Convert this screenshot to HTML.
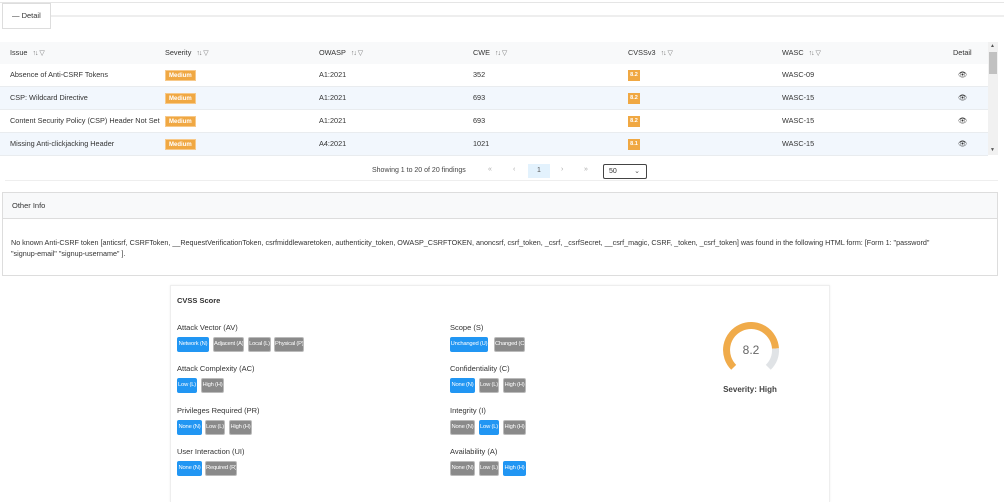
<!DOCTYPE html>
<html><head><meta charset="utf-8"><style>
*{box-sizing:border-box;margin:0;padding:0}
body{width:1004px;height:502px;background:#fff;font-family:"Liberation Sans",sans-serif;color:#333;position:relative;overflow:hidden;font-size:7px}
.a{position:absolute}
.hd{position:absolute;top:42px;left:0;width:988px;height:22px;background:#f8f9fa}
.row{position:absolute;left:0;width:988px;height:23px;border-bottom:1px solid #e9ecef}
.c{position:absolute;top:0;line-height:22px;white-space:nowrap;font-size:7.3px}
.med{display:inline-block;background:#f0a843;color:#fff;font-size:6px;font-weight:bold;padding:0 3px;height:11px;line-height:11px;vertical-align:middle;border:1px solid #f7c98a}
.sc{display:inline-block;background:#f0a843;color:#fff;font-size:5.5px;font-weight:bold;width:12px;height:11px;line-height:11px;text-align:center;vertical-align:middle}
.ic{color:#777;font-size:7px;margin-left:5px;letter-spacing:-1px}
.b{position:absolute;height:15px;line-height:15px;color:#fff;font-family:"Liberation Sans Narrow","Liberation Sans",sans-serif;font-size:5.8px;letter-spacing:-0.2px;padding:0;border-radius:2px;white-space:nowrap;text-align:center;overflow:hidden}
.bl{background:#2196f3}.gr{background:#8a8a8a;border:1px solid #bbb;line-height:13px}
.lb{position:absolute;font-size:7.5px;color:#333}
</style></head><body>
<div class="a" style="left:0;top:2px;width:1004px;height:1px;background:#e5e5e5"></div>
<div class="a" style="left:51px;top:15px;width:953px;height:2px;background:#eee"></div>
<div class="a" style="left:2px;top:3px;width:49px;height:26px;border:1px solid #ddd;background:#fff;line-height:24px;padding-left:9px;font-size:7.5px">— Detail</div>

<div class="hd">
<div class="c" style="left:10px">Issue<span class="ic">↑↓ &nbsp;▽</span></div>
<div class="c" style="left:165px">Severity<span class="ic">↑↓ &nbsp;▽</span></div>
<div class="c" style="left:319px">OWASP<span class="ic">↑↓ &nbsp;▽</span></div>
<div class="c" style="left:473px">CWE<span class="ic">↑↓ &nbsp;▽</span></div>
<div class="c" style="left:628px">CVSSv3<span class="ic">↑↓ &nbsp;▽</span></div>
<div class="c" style="left:782px">WASC<span class="ic">↑↓ &nbsp;▽</span></div>
<div class="c" style="left:953px">Detail</div>
</div>

<div class="row" style="top:64px;background:#fff"><div class="c" style="left:10px">Absence of Anti-CSRF Tokens</div><div class="c" style="left:165px"><span class="med">Medium</span></div><div class="c" style="left:319px">A1:2021</div><div class="c" style="left:473px">352</div><div class="c" style="left:628px"><span class="sc">8.2</span></div><div class="c" style="left:782px">WASC-09</div><div class="c" style="left:958px">👁</div></div>
<div class="row" style="top:87px;background:#f2f7fd"><div class="c" style="left:10px">CSP: Wildcard Directive</div><div class="c" style="left:165px"><span class="med">Medium</span></div><div class="c" style="left:319px">A1:2021</div><div class="c" style="left:473px">693</div><div class="c" style="left:628px"><span class="sc">8.2</span></div><div class="c" style="left:782px">WASC-15</div><div class="c" style="left:958px">👁</div></div>
<div class="row" style="top:110px;background:#fff"><div class="c" style="left:10px">Content Security Policy (CSP) Header Not Set</div><div class="c" style="left:165px"><span class="med">Medium</span></div><div class="c" style="left:319px">A1:2021</div><div class="c" style="left:473px">693</div><div class="c" style="left:628px"><span class="sc">8.2</span></div><div class="c" style="left:782px">WASC-15</div><div class="c" style="left:958px">👁</div></div>
<div class="row" style="top:133px;background:#f2f7fd"><div class="c" style="left:10px">Missing Anti-clickjacking Header</div><div class="c" style="left:165px"><span class="med">Medium</span></div><div class="c" style="left:319px">A4:2021</div><div class="c" style="left:473px">1021</div><div class="c" style="left:628px"><span class="sc">8.1</span></div><div class="c" style="left:782px">WASC-15</div><div class="c" style="left:958px">👁</div></div>

<div class="a" style="left:988px;top:42px;width:10px;height:113px;background:#f1f1f1"></div>
<div class="a" style="left:989px;top:52px;width:8px;height:22px;background:#c1c1c1"></div>
<div class="a" style="left:990px;top:43px;font-size:5px;color:#555">▲</div>
<div class="a" style="left:990px;top:147px;font-size:5px;color:#555">▼</div>

<div class="a" style="left:372px;top:167px;font-size:7px;color:#444">Showing 1 to 20 of 20 findings</div>
<div class="a" style="left:488px;top:166px;font-size:7px;color:#aaa">«</div>
<div class="a" style="left:513px;top:166px;font-size:7px;color:#aaa">‹</div>
<div class="a" style="left:528px;top:164px;width:22px;height:14px;background:#e3f2fd;color:#555;text-align:center;line-height:14px;font-size:7px">1</div>
<div class="a" style="left:561px;top:166px;font-size:7px;color:#aaa">›</div>
<div class="a" style="left:584px;top:166px;font-size:7px;color:#aaa">»</div>
<div class="a" style="left:603px;top:164px;width:44px;height:15px;border:1px solid #444;border-radius:2px;font-size:7px;line-height:13px;padding-left:5px">50<span style="position:absolute;right:6px;color:#555">⌄</span></div>
<div class="a" style="left:5px;top:180px;width:993px;height:1px;background:#eee"></div>

<div class="a" style="left:2px;top:192px;width:996px;height:84px;border:1px solid #ddd"></div>
<div class="a" style="left:3px;top:193px;width:994px;height:26px;background:#f8f9fa;border-bottom:1px solid #ddd;line-height:26px;padding-left:9px;font-size:7.5px">Other Info</div>
<div class="a" style="left:11px;top:237px;width:940px;font-size:7.2px;line-height:11px;color:#333">No known Anti-CSRF token [anticsrf, CSRFToken, __RequestVerificationToken, csrfmiddlewaretoken, authenticity_token, OWASP_CSRFTOKEN, anoncsrf, csrf_token, _csrf, _csrfSecret, __csrf_magic, CSRF, _token, _csrf_token] was found in the following HTML form: [Form 1: "password" "signup&#8209;email" "signup&#8209;username" ].</div>

<div class="a" style="left:170px;top:285px;width:660px;height:217px;border:1px solid #eee;border-bottom:none;box-shadow:0 0 2px #eee"></div>
<div class="lb" style="left:177px;top:296px;font-weight:bold;font-size:7.5px">CVSS Score</div>

<div class="lb" style="left:177px;top:323px">Attack Vector (AV)</div>
<div class="b bl" style="left:177px;top:337px;width:32px">Network (N)</div>
<div class="b gr" style="left:213px;top:337px;width:31px">Adjacent (A)</div>
<div class="b gr" style="left:248px;top:337px;width:23px">Local (L)</div>
<div class="b gr" style="left:274px;top:337px;width:30px">Physical (P)</div>

<div class="lb" style="left:177px;top:364px">Attack Complexity (AC)</div>
<div class="b bl" style="left:177px;top:378px;width:20px">Low (L)</div>
<div class="b gr" style="left:201px;top:378px;width:23px">High (H)</div>

<div class="lb" style="left:177px;top:406px">Privileges Required (PR)</div>
<div class="b bl" style="left:177px;top:420px;width:25px">None (N)</div>
<div class="b gr" style="left:205px;top:420px;width:20px">Low (L)</div>
<div class="b gr" style="left:229px;top:420px;width:23px">High (H)</div>

<div class="lb" style="left:177px;top:447px">User Interaction (UI)</div>
<div class="b bl" style="left:177px;top:461px;width:25px">None (N)</div>
<div class="b gr" style="left:205px;top:461px;width:32px">Required (R)</div>

<div class="lb" style="left:450px;top:323px">Scope (S)</div>
<div class="b bl" style="left:450px;top:337px;width:38px">Unchanged (U)</div>
<div class="b gr" style="left:494px;top:337px;width:31px">Changed (C)</div>

<div class="lb" style="left:450px;top:364px">Confidentiality (C)</div>
<div class="b bl" style="left:450px;top:378px;width:25px">None (N)</div>
<div class="b gr" style="left:479px;top:378px;width:20px">Low (L)</div>
<div class="b gr" style="left:503px;top:378px;width:23px">High (H)</div>

<div class="lb" style="left:450px;top:406px">Integrity (I)</div>
<div class="b gr" style="left:450px;top:420px;width:25px">None (N)</div>
<div class="b bl" style="left:479px;top:420px;width:20px">Low (L)</div>
<div class="b gr" style="left:503px;top:420px;width:23px">High (H)</div>

<div class="lb" style="left:450px;top:447px">Availability (A)</div>
<div class="b gr" style="left:450px;top:461px;width:25px">None (N)</div>
<div class="b gr" style="left:479px;top:461px;width:20px">Low (L)</div>
<div class="b bl" style="left:503px;top:461px;width:23px">High (H)</div>

<svg class="a" style="left:0;top:0" width="1004" height="502">
<path d="M733.7 367.3 A24.5 24.5 0 1 1 775.5 348.5" fill="none" stroke="#f0ab4a" stroke-width="7"/>
<path d="M775.5 348.5 A24.5 24.5 0 0 1 768.3 367.3" fill="none" stroke="#e0e3e6" stroke-width="7"/>
<text x="751" y="354" text-anchor="middle" font-family="Liberation Sans" font-size="12" fill="#666">8.2</text>
<text x="750" y="392" text-anchor="middle" font-family="Liberation Sans" font-size="8" font-weight="bold" fill="#444">Severity: High</text>
</svg>
</body></html>
